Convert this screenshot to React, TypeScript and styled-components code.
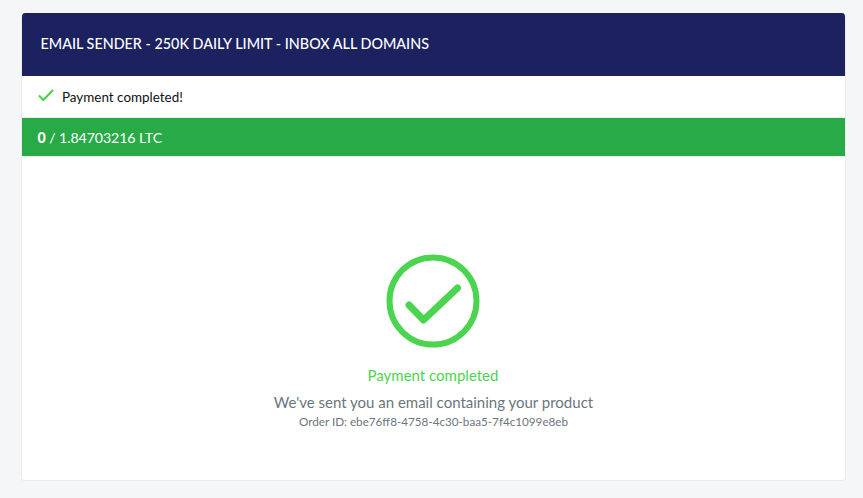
import React from 'react';
import styled, { createGlobalStyle } from 'styled-components';

const GlobalStyle = createGlobalStyle`
  html, body {
    margin: 0;
    height: 100%;
    background: #f4f6f8;
    font-family: 'Lato', 'Liberation Sans', sans-serif;
  }
`;

const App: React.FC = () => {
  return (
    <>
      <GlobalStyle />
      <Page>
        <Card>
          <Header>
            <Title>EMAIL SENDER - 250K DAILY LIMIT - INBOX ALL DOMAINS</Title>
          </Header>
          <Status>
            <SmallCheck viewBox="0 0 16 12" fill="none">
              <path d="M1 6.5L5.4 11L15 1" stroke="#4bd44f" strokeWidth="2.2" />
            </SmallCheck>
            <StatusText>Payment completed!</StatusText>
          </Status>
          <AmountBar>
            <strong>0</strong> / 1.84703216 LTC
          </AmountBar>
          <Body>
            <BigCheck viewBox="0 0 94 94" fill="none">
              <circle cx="47" cy="47" r="43.5" stroke="#4bd44f" strokeWidth="6" />
              <path
                d="M23 51L37.5 66L71.5 34"
                stroke="#4bd44f"
                strokeWidth="7"
                strokeLinecap="round"
                strokeLinejoin="round"
              />
            </BigCheck>
            <Completed>Payment completed</Completed>
            <Message>We've sent you an email containing your product</Message>
            <OrderId>Order ID: ebe76ff8-4758-4c30-baa5-7f4c1099e8eb</OrderId>
          </Body>
        </Card>
      </Page>
    </>
  );
};

const Page = styled.div`
  padding: 13px 17px 17px 21px;
`;

const Card = styled.div`
  height: 468px;
  box-sizing: border-box;
  display: flex;
  flex-direction: column;
  background: #fff;
  border: 1px solid #e8ebf0;
  border-top: none;
  border-radius: 4px;
  overflow: hidden;
`;

const Header = styled.div`
  height: 63px;
  margin: 0 -1px;
  display: flex;
  align-items: center;
  padding: 0 0 2px 19.5px;
  box-sizing: border-box;
  background: #1c2260;
`;

const Title = styled.h1`
  margin: 0;
  color: #fff;
  font-size: 14.35px;
  font-weight: 500;
`;

const Status = styled.div`
  height: 41px;
  display: flex;
  align-items: center;
  padding-left: 16px;
  border-bottom: 1px solid #e8ebf0;
`;

const SmallCheck = styled.svg`
  width: 16px;
  height: 12px;
  margin-top: -3px;
`;

const StatusText = styled.span`
  margin-left: 8px;
  font-size: 13.45px;
  color: #111;
`;

const AmountBar = styled.div`
  height: 38px;
  display: flex;
  align-items: center;
  white-space: pre;
  padding-left: 15.5px;
  background: #28aa46;
  color: #fff;
  font-size: 14.2px;
  letter-spacing: -0.1px;
  border-bottom: 1px solid #e8ebf0;

  strong {
    font-weight: 900;
  }
`;

const Body = styled.div`
  flex: 1;
  display: flex;
  flex-direction: column;
  align-items: center;
  padding-top: 97px;
`;

const BigCheck = styled.svg`
  width: 94px;
  height: 94px;
  margin-right: 1px;
`;

const Completed = styled.div`
  margin-top: 17px;
  color: #4bd44f;
  font-size: 15px;
  line-height: 20px;
  margin-right: 1px;
`;

const Message = styled.div`
  margin-top: 7px;
  color: #6c757d;
  font-size: 15px;
  line-height: 20px;
`;

const OrderId = styled.div`
  margin-top: 1px;
  color: #6c757d;
  font-size: 11.68px;
  line-height: 16px;
`;

export default App;
